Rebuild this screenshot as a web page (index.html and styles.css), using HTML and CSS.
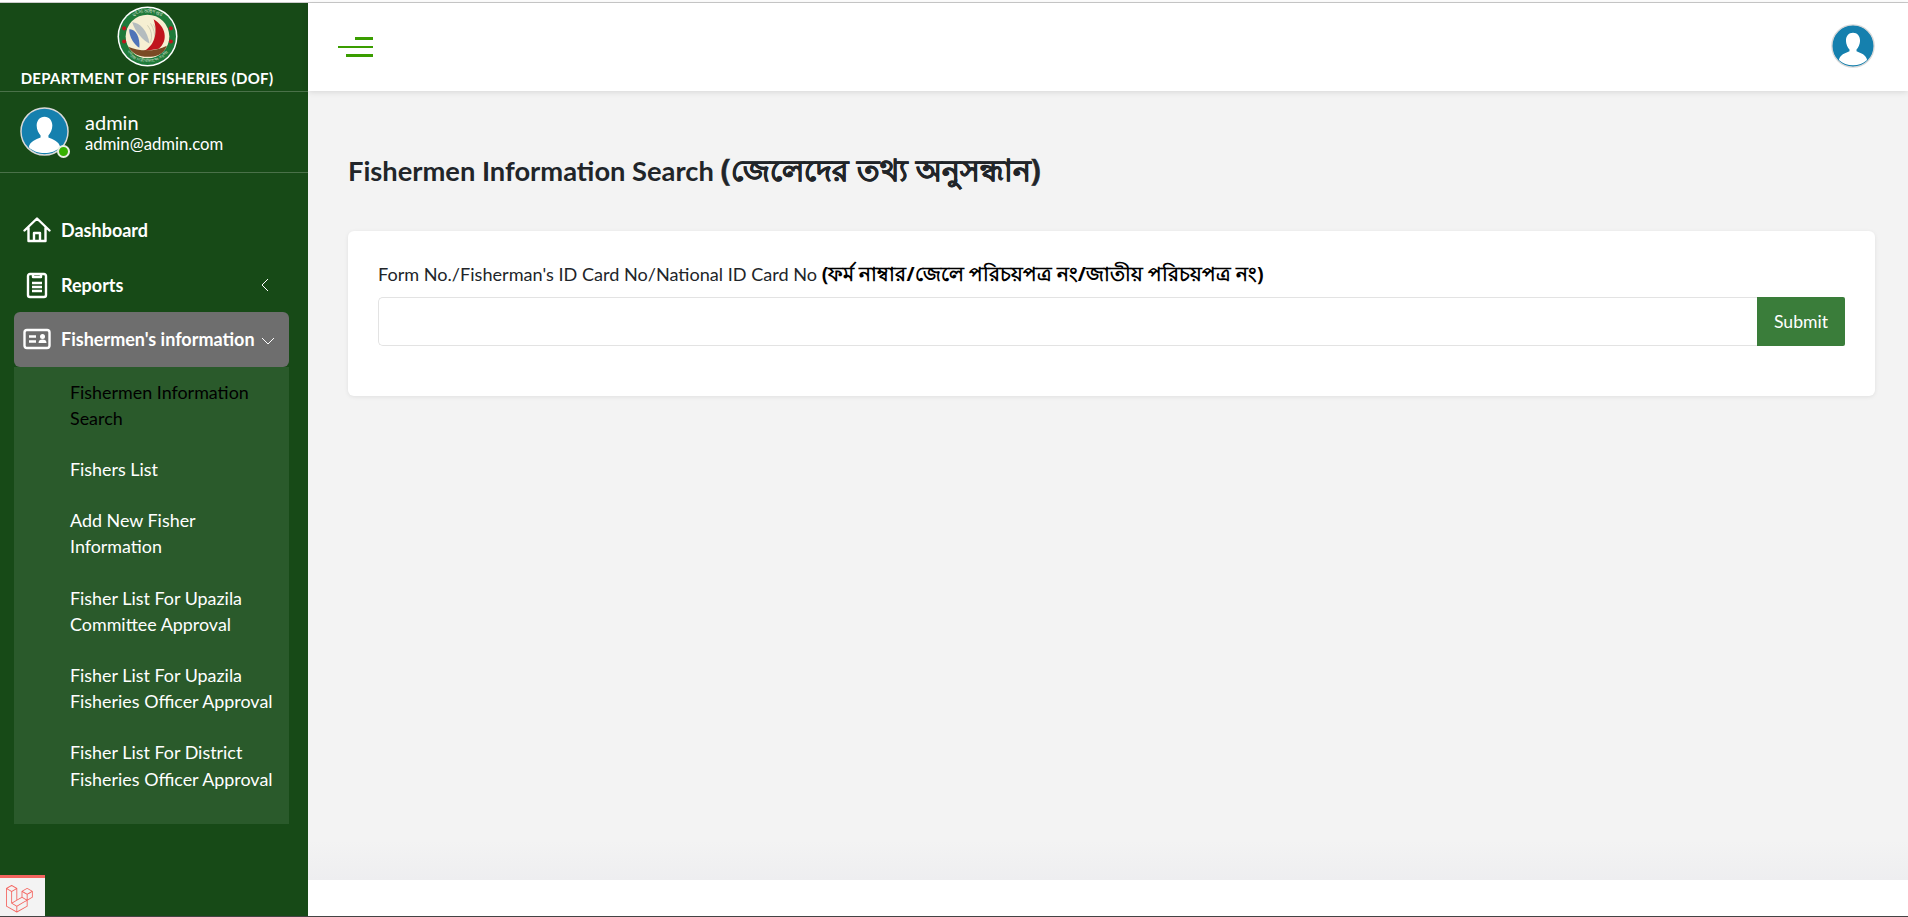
FILE: index.html
```html
<!DOCTYPE html>
<html>
<head>
  <title>Fishermen Information Search</title>
  <link rel="stylesheet" href="styles.css">
</head>
<body>
  <div class="topline"></div>
  <div class="page">
    <aside class="sidebar">
      <div class="brand">
        <svg class="logo" viewBox="0 0 60 60">
          <defs>
            <path id="arc-top" d="M6.500 30a23.500 23.500 0 0 1 47 0"/>
            <path id="arc-bottom" d="M4.500 30a25.500 25.500 0 0 0 51 0"/>
          </defs>
          <circle cx="30" cy="30" r="29.500" fill="#fff"/>
          <circle cx="30" cy="30" r="28" fill="#1f7a3a"/>
          <text class="seal-text"><textPath href="#arc-top" startOffset="50%" text-anchor="middle">মৎস্য অধিদপ্তর</textPath></text>
          <text class="seal-text small"><textPath href="#arc-bottom" startOffset="50%" text-anchor="middle">গণপ্রজাতন্ত্রী বাংলাদেশ সরকার</textPath></text>
          <circle cx="30" cy="30" r="21.500" fill="#f6efd2"/>
          <path d="M33 17 q5 8 4 17 M36 18 q4 8 1 17 M30 19 q6 7 3 17" fill="none" stroke="#c9c6ab" stroke-width=".8"/>
          <path d="M36 13 C48 20 51 34 41 42 L26 44.500 C36 40 41 27 36 13Z" fill="#c0141c"/>
          <path d="M11 40 C22 45 38 45 49 39 C46 48 38 50 30 50 C22 50 15 47 11 40Z" fill="#7a4a24"/>
          <path d="M15 16 C22 16 30 24 32 37 C26 34 18 26 15 16Z" fill="#b4bcbe"/>
          <path d="M12 23 C18 22 23 31 22 41 C17 38 12 31 12 23Z" fill="#4f74b8"/>
          <circle cx="7" cy="22" r="2" fill="#c0141c"/>
          <circle cx="53" cy="22" r="2" fill="#c0141c"/>
          <circle cx="7" cy="35" r="2" fill="#c0141c"/>
          <circle cx="53" cy="35" r="2" fill="#c0141c"/>
        </svg>
        <div class="brand-name">DEPARTMENT OF FISHERIES (DOF)</div>
      </div>
      <div class="user">
        <div class="user-pic">
          <svg class="avatar" viewBox="0 0 50 50">
            <circle cx="25" cy="25" r="24" fill="#1580ae" stroke="#d9d9d9" stroke-width="1.500"/>
            <path d="M25 10c5 0 8 4 8 9 0 4-2 8-4 10v2c5 2 11 4 12 10-4 4-10 6-16 6s-12-2-16-6c1-6 7-8 12-10v-2c-2-2-4-6-4-10 0-5 3-9 8-9z" fill="#fff"/>
          </svg>
          <span class="online"></span>
        </div>
        <div>
          <div class="user-name">admin</div>
          <div class="user-mail">admin@admin.com</div>
        </div>
      </div>
      <nav class="menu">
        <a class="item">
          <svg class="icon" viewBox="0 0 28 28"><path d="M1.500 14.500 14 2.500l12.500 12M5.500 11.500V25h17V11.500M11 25v-8h6v8" fill="none" stroke="#fff" stroke-width="2.400" stroke-linejoin="round" stroke-linecap="round"/></svg>
          <span>Dashboard</span>
        </a>
        <a class="item">
          <svg class="icon" viewBox="0 0 28 28"><path d="M10 3H7a2 2 0 0 0-2 2v19a2 2 0 0 0 2 2h14a2 2 0 0 0 2-2V5a2 2 0 0 0-2-2h-3v3h-8zM10 3h8M9 12h10M9 16h10M9 20h10" fill="none" stroke="#fff" stroke-width="2.400" stroke-linejoin="round"/></svg>
          <span>Reports</span>
          <svg class="chev" viewBox="0 0 12 14"><path d="M8 1 2 7l6 6" fill="none" stroke="#fff" stroke-width="1"/></svg>
        </a>
        <a class="item active">
          <svg class="icon" viewBox="0 0 28 28"><rect x="1.500" y="5" width="25" height="18" rx="2.500" fill="none" stroke="#fff" stroke-width="2.400"/><path d="M6 11.500h7M6 16.500h7" stroke="#fff" stroke-width="2.400"/><circle cx="19.500" cy="11.500" r="2.500" fill="#fff"/><path d="M15.500 18c0-2.500 1.500-3.500 4-3.500s4 1 4 3.500z" fill="#fff"/></svg>
          <span>Fishermen's information</span>
          <svg class="chev down" viewBox="0 0 14 12"><path d="M1 3l6 6 6-6" fill="none" stroke="#fff" stroke-width="1"/></svg>
        </a>
        <div class="submenu">
          <a class="sub current">Fishermen Information Search</a>
          <a class="sub">Fishers List</a>
          <a class="sub">Add New Fisher Information</a>
          <a class="sub">Fisher List For Upazila Committee Approval</a>
          <a class="sub">Fisher List For Upazila Fisheries Officer Approval</a>
          <a class="sub">Fisher List For District Fisheries Officer Approval</a>
        </div>
      </nav>
    </aside>

    <div class="main">
      <header class="topbar">
        <div class="burger"><i class="b1"></i><i class="b2"></i><i class="b3"></i></div>
        <svg class="avatar-top" viewBox="0 0 50 50">
          <circle cx="25" cy="25" r="24" fill="#1580ae" stroke="#d9d9d9" stroke-width="1.500"/>
          <path d="M25 10c5 0 8 4 8 9 0 4-2 8-4 10v2c5 2 11 4 12 10-4 4-10 6-16 6s-12-2-16-6c1-6 7-8 12-10v-2c-2-2-4-6-4-10 0-5 3-9 8-9z" fill="#fff"/>
        </svg>
      </header>
      <main class="content">
        <h1>Fishermen Information Search <span class="bn">(জেলেদের তথ্য অনুসন্ধান)</span></h1>
        <section class="card">
          <label>Form No./Fisherman's ID Card No/National ID Card No <b class="bn">(ফর্ম নাম্বার/জেলে পরিচয়পত্র নং/জাতীয় পরিচয়পত্র নং)</b></label>
          <div class="search">
            <input type="text">
            <button>Submit</button>
          </div>
        </section>
      </main>
      <footer class="footer"></footer>
    </div>
  </div>

  <div class="debugbar">
    <svg viewBox="0 0 50 52"><path d="M49.626 11.564a.809.809 0 0 1 .028.209v10.972a.8.8 0 0 1-.402.694l-9.209 5.302V39.25c0 .286-.152.55-.4.694L20.42 51.01c-.044.025-.092.041-.14.058-.018.006-.035.017-.054.022a.805.805 0 0 1-.41 0c-.022-.006-.042-.018-.063-.026-.044-.016-.09-.03-.132-.054L.402 39.944A.801.801 0 0 1 0 39.25V6.334c0-.072.01-.142.028-.21.006-.023.02-.044.028-.067.015-.042.029-.085.051-.124.015-.026.037-.047.055-.071.023-.032.044-.065.071-.093.023-.023.053-.04.079-.06.029-.024.055-.05.088-.069h.001l9.61-5.533a.802.802 0 0 1 .8 0l9.61 5.533h.002c.032.02.059.045.088.068.026.02.055.038.078.06.028.029.048.062.072.094.017.024.04.045.054.071.023.04.036.082.052.124.008.023.022.044.028.068a.809.809 0 0 1 .028.209v20.559l8.008-4.611v-10.51c0-.07.01-.141.028-.208.007-.024.02-.045.028-.068.016-.042.03-.085.052-.124.015-.026.037-.047.054-.071.024-.032.044-.065.072-.093.023-.023.052-.04.078-.06.03-.024.056-.05.088-.069h.001l9.611-5.533a.801.801 0 0 1 .8 0l9.61 5.533c.034.02.06.045.09.068.025.02.054.038.077.06.028.029.048.062.072.094.018.024.04.045.054.071.023.039.036.082.052.124.009.023.022.044.028.068zm-1.574 10.718v-9.124l-3.363 1.936-4.646 2.675v9.124l8.01-4.611zm-9.61 16.505v-9.13l-4.57 2.61-13.05 7.448v9.216l17.62-10.144zM1.602 7.719v31.068L19.22 48.93v-9.214l-9.204-5.209-.003-.002-.004-.002c-.031-.018-.057-.044-.086-.066-.025-.02-.054-.036-.076-.058l-.002-.003c-.026-.025-.044-.056-.066-.084-.02-.027-.044-.05-.06-.078l-.001-.003c-.018-.03-.029-.066-.042-.1-.013-.03-.03-.058-.038-.09v-.001c-.01-.038-.012-.078-.016-.117-.004-.03-.012-.06-.012-.09v-.002-21.481L4.965 9.654 1.602 7.72zm8.81-5.994L2.405 6.334l8.005 4.609 8.006-4.61-8.006-4.608zm4.164 28.764l4.645-2.674V7.719l-3.363 1.936-4.646 2.675v20.096l3.364-1.937zM39.243 7.164l-8.006 4.609 8.006 4.609 8.005-4.61-8.005-4.608zm-.801 10.605l-4.646-2.675-3.363-1.936v9.124l4.645 2.674 3.364 1.937v-9.124zM20.02 38.33l11.743-6.704 5.87-3.35-8-4.606-9.211 5.303-8.395 4.833 7.993 4.524z" fill="#f4645f"/></svg>
  </div>
</body>
</html>
```

FILE: styles.css
```css
* { box-sizing: border-box; }
html, body { height: 100%; }
body {
  margin: 0;
  font-family: Lato, "Noto Sans", sans-serif;
  font-size: 18.100px;
  color: #212529;
  background: #fff;
  overflow: hidden;
  border-bottom: 1px solid #444;
}
.topline { height: 3px; background: #fff; border-bottom: 1px solid #ccc; }
.page { display: flex; height: calc(100% - 3px); }

.sidebar {
  width: 308px;
  flex-shrink: 0;
  background: #174a17;
  color: #fff;
}
.brand {
  height: 89px;
  border-bottom: 1px solid #4a7149;
  display: flex;
  flex-direction: column;
  align-items: center;
  padding: 3px 14px 0 0;
}
.logo { width: 61px; height: 61px; display: block; }
.seal-text { font-size: 5px; fill: #f2f5e6; }
.seal-text.small { font-size: 3.800px; }
.brand-name { font-size: 15px; font-weight: 700; letter-spacing: .3px; margin-top: 2px; line-height: 19px; white-space: nowrap; }
.user {
  height: 81px;
  border-bottom: 1px solid #4a7149;
  display: flex;
  align-items: center;
  gap: 15px;
  padding: 0 19px;
}
.user-pic { position: relative; width: 51px; height: 51px; }
.avatar { width: 51px; height: 49px; display: block; }
.online {
  position: absolute;
  right: 0;
  bottom: 0;
  width: 13px;
  height: 13px;
  background: #35b000;
  border: 2px solid #e9efe4;
  border-radius: 50%;
}
.user-name { font-size: 20px; line-height: 24px; }
.user-mail { font-size: 16.700px; line-height: 20px; }

.menu { padding: 29px 19px 0 14px; }
.item {
  display: flex;
  align-items: center;
  height: 55px;
  padding-left: 9px;
  color: #fff;
  font-size: 18px;
  font-weight: 700;
  white-space: nowrap;
}
.item .icon { width: 28px; height: 28px; margin-right: 10px; flex-shrink: 0; }
.item .chev { width: 12px; height: 14px; margin-left: auto; margin-right: 17px; }
.item .chev.down { width: 14px; height: 12px; margin-left: 6px; margin-right: 0; margin-top: 4px; }
.active { background: #6e6e6e; border-radius: 6px; padding-bottom: 2px; }
.submenu {
  height: 457px;
  background: #2a5a2b;
}
.sub {
  display: block;
  padding: 12.500px 10px 12.500px 56px;
  font-size: 17.900px;
  line-height: 26.200px;
  color: #fff;
}
.sub:first-child { padding-top: 11.500px; }
.sub.current { color: #000; }

.main { flex: 1; display: flex; flex-direction: column; min-width: 0; }
.topbar {
  height: 88px;
  flex-shrink: 0;
  background: #fff;
  box-shadow: 0 1px 6px rgba(0,0,0,.12);
  display: flex;
  align-items: center;
  justify-content: space-between;
  padding: 0 33px 0 30px;
  position: relative;
}
.burger { display: flex; flex-direction: column; align-items: flex-end; gap: 6px; width: 35px; }
.burger i { display: block; height: 2.500px; background: #3a9d00; }
.b1 { width: 18px; }
.b2 { width: 35px; }
.b3 { width: 27px; }
.avatar-top { width: 44px; height: 44px; margin-bottom: 3px; }

.content {
  flex: 1;
  background: linear-gradient(#f3f3f3 0, #f3f3f3 95%, #eeeef0 100%);
  padding: 61px 33px 0 40px;
}
h1 { margin: 0 0 42px; font-size: 27.300px; font-weight: 700; line-height: 36px; color: #212529; white-space: nowrap; }
h1 .bn { font-family: "Noto Sans", sans-serif; font-size: 30.400px; line-height: 36px; -webkit-text-stroke: .4px #212529; }
.card {
  height: 165px;
  background: #fff;
  border-radius: 6px;
  box-shadow: 0 1px 4px rgba(0,0,0,.08);
  padding: 30px 30px 0;
}
label { display: block; line-height: 26px; height: 26px; margin-bottom: 10px; color: #212529; white-space: nowrap; }
label .bn { font-family: "Noto Sans", sans-serif; font-size: 19.500px; line-height: 26px; color: #000; }
.search { display: flex; height: 49px; }
.search input {
  flex: 1;
  min-width: 0;
  border: 1px solid #e3e3e3;
  border-right: 0;
  border-radius: 5px 0 0 5px;
  background: #fff;
}
.search button {
  width: 88px;
  border: 0;
  border-radius: 0 2px 2px 0;
  background: #3a7d3a;
  color: #fff;
  font-family: inherit;
  font-size: 17.600px;
}
.footer { height: 36px; flex-shrink: 0; background: #fff; }

.debugbar {
  position: absolute;
  left: 0;
  bottom: 1px;
  width: 45px;
  height: 41px;
  background: #f3f3f3;
  border-top: 3px solid #f4645f;
  padding: 7px 0 0 6px;
  box-shadow: 0 -1px 0 #174a17;
}
.debugbar svg { width: 27px; height: 28px; display: block; }
```
